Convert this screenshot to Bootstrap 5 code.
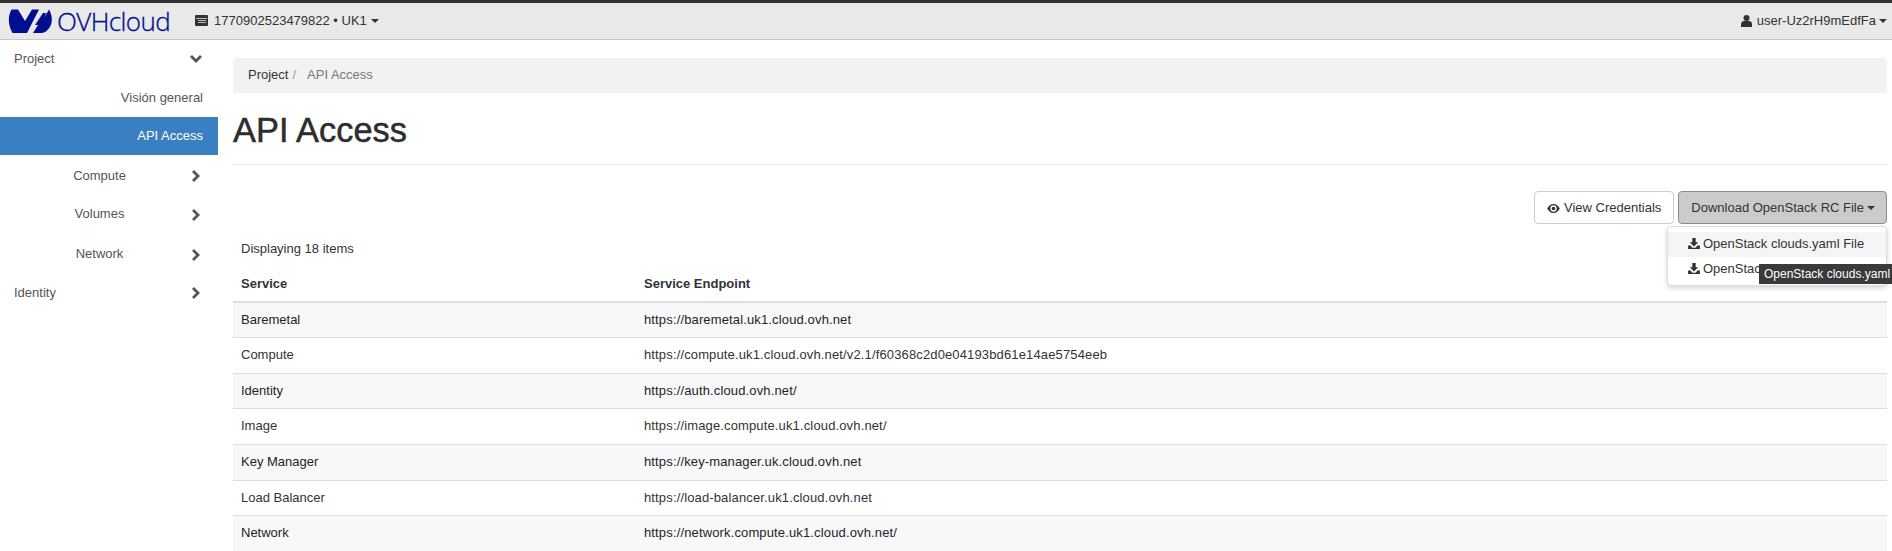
<!DOCTYPE html>
<html lang="es">
<head>
<meta charset="utf-8">
<title>API Access</title>
<link rel="stylesheet" href="https://cdn.jsdelivr.net/npm/bootstrap@5.3.0/dist/css/bootstrap.min.css">
<style>
html,body{height:551px;overflow:hidden}
body{font-family:"Liberation Sans",Arial,sans-serif;font-size:13px;line-height:1.43;color:#333;background:#fff}
.top{height:40px;background:#e9e9e9;border-top:3px solid #333;border-bottom:1px solid #c8c8c8;padding:0 5px 0 8px}
.brand{font-family:"Open Sans",sans-serif;font-weight:300;font-size:26px;line-height:36px;color:#000e8f;letter-spacing:-.6px;margin-left:5px;-webkit-text-stroke:.3px #000e8f}
.logo{width:44px;height:25px;display:block}
.ctx{margin-left:25px;color:#333}
.ctx svg{margin-right:6px}
.user svg{margin-right:5px}
.caret-d{display:inline-block;width:0;height:0;border-top:4px solid #333;border-left:4px solid transparent;border-right:4px solid transparent;vertical-align:middle;margin-left:3px}
.side{width:218px;flex:none}
.side a{display:flex;align-items:center;height:39px;color:#555;text-decoration:none;padding:0 15px 0 14px}
.side a.sub{justify-content:flex-end;padding-top:1px}
.side a.group{padding-left:10px}
.side a.group span{flex:1;text-align:center}
.side a.active{background:#3a7fc2;color:#fff;height:38px;padding-top:0}
.side a.top1{height:38px}
.side a.g1{height:40px;padding-top:2px}
.side a.g2{height:39px;padding-top:0}
.side a.g3{height:40px;padding-top:1px}
.side a.g4{height:38px}
.side svg{width:14px;height:14px;fill:none;stroke:#555;stroke-width:2.8;margin-left:auto}
.main{flex:1;min-width:0;padding:18px 5px 0 15px}
.breadcrumb{background:#f2f2f2;border-radius:4px;height:35px;padding:0 15px;margin:0;align-items:center;--bs-breadcrumb-divider:"/";--bs-breadcrumb-item-padding-x:4px}
.breadcrumb-item a{color:#333;text-decoration:none}
.breadcrumb-item.active{color:#777}
.breadcrumb-item+.breadcrumb-item::before{color:#999;padding-right:11px}
h1{font-size:34.4px;font-weight:400;color:#2d2d2d;margin:19px 0 0;line-height:36px;-webkit-text-stroke:.5px #2d2d2d}
.rule{border-bottom:1px solid #eee;height:17px}
.actions{margin-top:26px;position:relative}
.btn-a{font-size:13px;line-height:18px;padding:6px 12px;border-radius:4px;height:33px;color:#333}
.btn-v{background:#fff;border:1px solid #ccc}
.btn-d{background:#cbcbcb;border:1px solid #8c8c8c;padding-right:11px}
.menu{display:block;position:absolute;top:35px;right:0;width:220px;height:60px;padding:5px 0;margin:0;font-size:13px;border:1px solid #ddd;border-radius:4px;box-shadow:0 2px 5px rgba(0,0,0,.18);z-index:5}
.menu .dropdown-item{height:25px;padding:2px 20px;line-height:20px;color:#333;font-size:13px}
.menu .dropdown-item.hov{background:#f5f5f5}
.tip{position:absolute;left:91px;top:37px;width:134px;height:20px;background:#3a3a3a;color:#fff;font-size:12px;line-height:20px;padding-left:5px;white-space:nowrap;z-index:6}
.dl{width:12px;height:11px;fill:#333;vertical-align:-1px;margin-right:3px}
.count{padding:0 8px;margin-top:16px;height:18px}
.table{--bs-table-striped-bg:#f8f8f8;--bs-table-border-color:#ddd;--bs-table-color:#333;margin:0;font-size:13px;table-layout:fixed}
.table>*>tr>*{padding:8px;line-height:18.6px;border-bottom:0;border-top:1px solid #ddd}
.table th{font-weight:700;border-top:0;padding-top:17px;padding-bottom:7px}
.table thead tr{border-bottom:2px solid #ddd}
.table tbody tr:first-child td{border-top:0}
.table tbody td+td{letter-spacing:.14px}
.c1{width:403px}
</style>
</head>
<body>
<header class="top d-flex align-items-center">
  <svg class="logo" viewBox="0 0 44 25" aria-label="OVH"><path fill="#000e8f" d="M3.500 .5H10L17 12 24 .5H31L19 24H4.500C1.500 19 -1.500 10 3.500 .5Z"/><path fill="#000e8f" d="M41 .5C45.500 8 44.500 17 39 21.500 37.500 23 36 24 33 24H25L30 16H27L35 4H38L36.500 8Z"/></svg>
  <span class="brand">OVHcloud</span>
  <span class="ctx d-flex align-items-center">
    <svg width="13" height="11" viewBox="0 0 13 11"><rect width="13" height="11" rx="1" fill="#333"/><path d="M1 3.500h11M3 5.500h8M3 7.500h8" stroke="#ddd" stroke-width=".8"/></svg>
    1770902523479822 • UK1<span class="caret-d ms-1"></span>
  </span>
  <span class="user ms-auto d-flex align-items-center">
    <svg width="11" height="12" viewBox="0 0 11 12"><circle cx="5.500" cy="3" r="3" fill="#333"/><path fill="#333" d="M0 12V9c0-2 1.500-3 3-3h5c1.500 0 3 1 3 3v3z"/></svg>
    user-Uz2rH9mEdfFa<span class="caret-d"></span>
  </span>
</header>
<div class="d-flex">
  <nav class="side">
    <a href="#" class="top1"><span>Project</span><svg viewBox="0 0 14 14"><path d="M2 4l5 5 5-5"/></svg></a>
    <a href="#" class="sub">Visión general</a>
    <a href="#" class="sub active">API Access</a>
    <a href="#" class="group g1"><span>Compute</span><svg viewBox="0 0 14 14"><path d="M4 2l5 5-5 5"/></svg></a>
    <a href="#" class="group g2"><span>Volumes</span><svg viewBox="0 0 14 14"><path d="M4 2l5 5-5 5"/></svg></a>
    <a href="#" class="group g3"><span>Network</span><svg viewBox="0 0 14 14"><path d="M4 2l5 5-5 5"/></svg></a>
    <a href="#" class="g4"><span>Identity</span><svg viewBox="0 0 14 14"><path d="M4 2l5 5-5 5"/></svg></a>
  </nav>
  <main class="main">
    <ol class="breadcrumb d-flex">
      <li class="breadcrumb-item"><a href="#">Project</a></li>
      <li class="breadcrumb-item active">API Access</li>
    </ol>
    <h1>API Access</h1>
    <div class="rule"></div>
    <div class="actions d-flex justify-content-end gap-1">
      <button class="btn btn-a btn-v"><svg width="13" height="9" viewBox="0 0 14 10" class="me-1"><path fill="#333" fill-rule="evenodd" d="M7 0c3 0 5.500 2 7 5-1.500 3-4 5-7 5S1.500 8 0 5c1.500-3 4-5 7-5zm0 1.500a3.500 3.500 0 100 7 3.500 3.500 0 000-7zM7 3a2 2 0 110 4 2 2 0 010-4z"/></svg>View Credentials</button>
      <button class="btn btn-a btn-d">Download OpenStack RC File<span class="caret-d"></span></button>
      <div class="dropdown-menu menu">
        <a class="dropdown-item hov" href="#"><svg class="dl" viewBox="0 0 14 13"><path d="M5 0h4v5h3L7 10 2 5h3zM0 9h3l2 2.500h4L11 9h3v4H0z"/></svg>OpenStack clouds.yaml File</a>
        <a class="dropdown-item" href="#"><svg class="dl" viewBox="0 0 14 13"><path d="M5 0h4v5h3L7 10 2 5h3zM0 9h3l2 2.500h4L11 9h3v4H0z"/></svg>OpenStack RC File</a>
        <div class="tip">OpenStack clouds.yaml</div>
      </div>
    </div>
    <div class="count">Displaying 18 items</div>
    <table class="table table-striped">
      <thead><tr><th class="c1">Service</th><th>Service Endpoint</th></tr></thead>
      <tbody>
        <tr><td>Baremetal</td><td>https://baremetal.uk1.cloud.ovh.net</td></tr>
        <tr><td>Compute</td><td>https://compute.uk1.cloud.ovh.net/v2.1/f60368c2d0e04193bd61e14ae5754eeb</td></tr>
        <tr><td>Identity</td><td>https://auth.cloud.ovh.net/</td></tr>
        <tr><td>Image</td><td>https://image.compute.uk1.cloud.ovh.net/</td></tr>
        <tr><td>Key Manager</td><td>https://key-manager.uk.cloud.ovh.net</td></tr>
        <tr><td>Load Balancer</td><td>https://load-balancer.uk1.cloud.ovh.net</td></tr>
        <tr><td>Network</td><td>https://network.compute.uk1.cloud.ovh.net/</td></tr>
      </tbody>
    </table>
  </main>
</div>
<script src="https://cdn.jsdelivr.net/npm/bootstrap@5.3.0/dist/js/bootstrap.bundle.min.js"></script>
</body>
</html>
